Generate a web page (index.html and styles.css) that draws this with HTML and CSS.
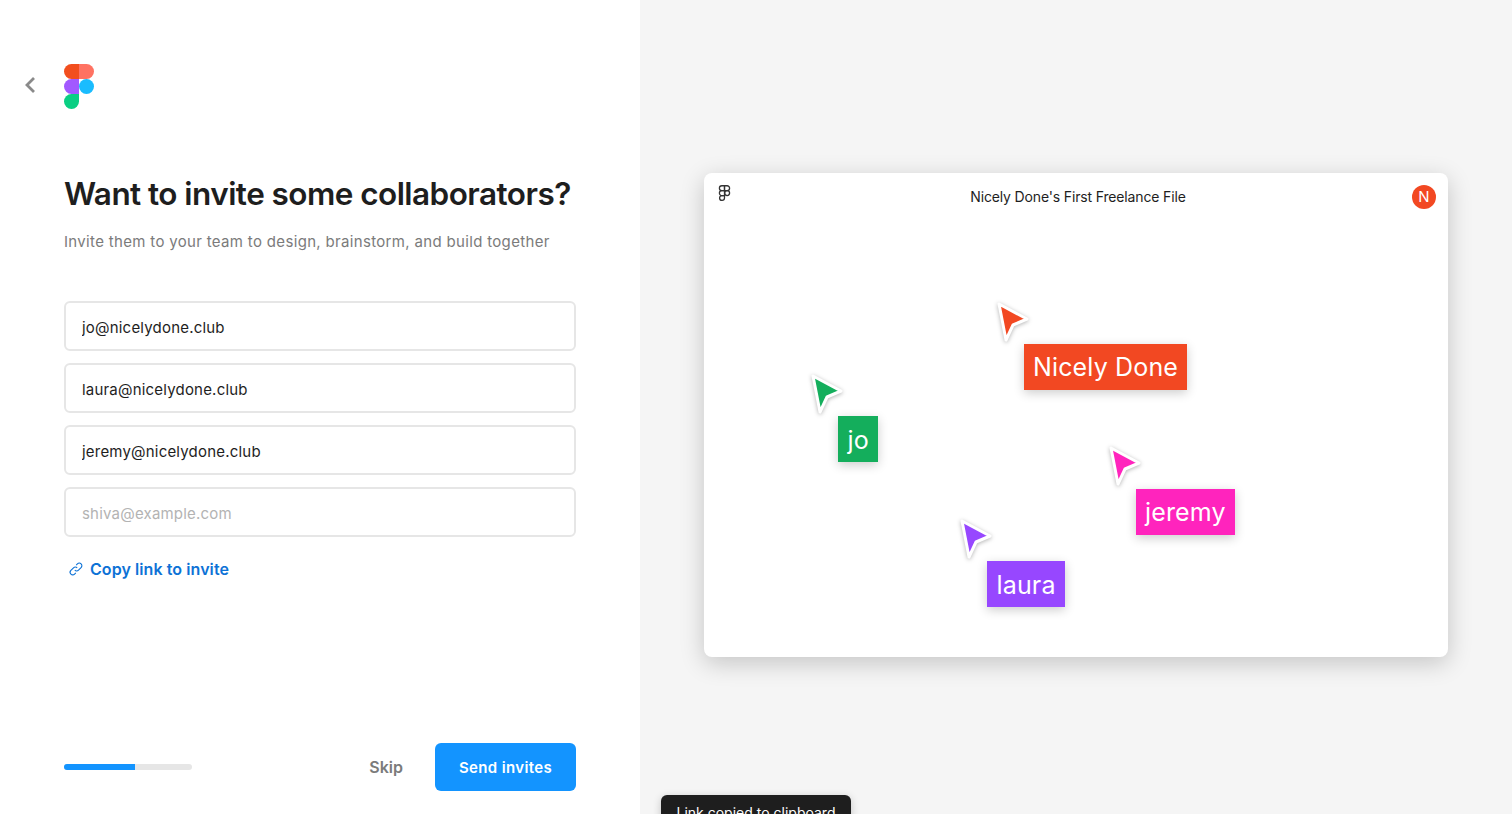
FILE: index.html
```html
<!DOCTYPE html>
<html lang="en">
<head>
    <meta charset="UTF-8">
    <meta name="viewport" content="width=device-width, initial-scale=1.0">
    <title>Invite collaborators</title>
    <link rel="stylesheet" href="styles.css">
</head>
<body>
    <div class="left">
        <div class="top-row">
            <button class="back" aria-label="Back">
                <svg width="12" height="18" viewBox="0 0 12 18"><path d="M10 2 3 9l7 7" fill="none" stroke="#8a8a8a" stroke-width="2.800"/></svg>
            </button>
            <svg class="logo" width="30" height="45" viewBox="0 0 30 45">
                <path d="M15 0H7.5a7.5 7.5 0 0 0 0 15H15z" fill="#f24e1e"/>
                <path d="M15 0h7.5a7.5 7.5 0 0 1 0 15H15z" fill="#ff7262"/>
                <path d="M15 15H7.5a7.5 7.5 0 0 0 0 15H15z" fill="#a259ff"/>
                <circle cx="22.5" cy="22.5" r="7.5" fill="#1abcfe"/>
                <path d="M15 30H7.5a7.5 7.5 0 1 0 7.5 7.5z" fill="#0acf83"/>
            </svg>
        </div>

        <h1>Want to invite some collaborators?</h1>
        <p class="sub">Invite them to your team to design, brainstorm, and build together</p>

        <div class="fields">
            <input type="text" value="jo@nicelydone.club">
            <input type="text" value="laura@nicelydone.club">
            <input type="text" value="jeremy@nicelydone.club">
            <input type="text" placeholder="shiva@example.com">
        </div>

        <a class="copy-link" href="#">
            <svg width="16" height="16" viewBox="0 0 16 16" fill="none" stroke="#0d72d6" stroke-width="1.1">
                <path d="M6.8 9.2a2.6 2.6 0 0 0 3.7 0l2.6-2.6a2.6 2.6 0 0 0-3.7-3.7L8.2 4.1"/>
                <path d="M9.2 6.8a2.6 2.6 0 0 0-3.7 0L2.9 9.4a2.6 2.6 0 0 0 3.7 3.7l1.2-1.2"/>
            </svg>
            Copy link to invite
        </a>

        <div class="footer">
            <div class="progress"><div class="progress-fill"></div></div>
            <a class="skip" href="#">Skip</a>
            <button class="send">Send invites</button>
        </div>
    </div>

    <div class="right">
        <div class="file-card">
            <div class="file-head">
                <svg class="mini-logo" width="13" height="17" viewBox="0 0 30 45" fill="none" stroke="#333" stroke-width="3.4">
                    <path d="M15 2H8a6.5 6.5 0 0 0 0 13h7z"/>
                    <path d="M15 2h7a6.5 6.5 0 0 1 0 13h-7z"/>
                    <path d="M15 15H8a6.5 6.5 0 0 0 0 13h7z"/>
                    <circle cx="22" cy="21.500" r="6.500"/>
                    <path d="M15 28H8a6.500 6.500 0 1 0 7 6.500z"/>
                </svg>
                <span class="file-name">Nicely Done's First Freelance File</span>
                <span class="avatar">N</span>
            </div>

            <!-- cursores no canvas -->
            <svg class="cursor cursor-red" width="38" height="44" viewBox="0 0 38 44"><path d="M5 5 33 20 19 26 12 41z"/></svg>
            <div class="tag tag-red">Nicely Done</div>

            <svg class="cursor cursor-green" width="38" height="44" viewBox="0 0 38 44"><path d="M5 5 33 20 19 26 12 41z"/></svg>
            <div class="tag tag-green">jo</div>

            <svg class="cursor cursor-pink" width="38" height="44" viewBox="0 0 38 44"><path d="M5 5 33 20 19 26 12 41z"/></svg>
            <div class="tag tag-pink">jeremy</div>

            <svg class="cursor cursor-purple" width="38" height="44" viewBox="0 0 38 44"><path d="M5 5 33 20 19 26 12 41z"/></svg>
            <div class="tag tag-purple">laura</div>
        </div>

        <div class="toast">Link copied to clipboard</div>
    </div>
</body>
</html>
```

FILE: styles.css
```css
* {
    box-sizing: border-box;
    margin: 0;
    padding: 0;
}

body {
    font-family: 'Inter', 'Liberation Sans', sans-serif;
    display: flex;
    height: 100vh;
    overflow: hidden;
    background-color: #fff;
    color: #1e1e1e;
}

.left {
    width: 640px;
    flex-shrink: 0;
    display: flex;
    flex-direction: column;
    padding: 64px 64px 23px;
}

.top-row {
    display: flex;
    align-items: center;
    margin-left: -40px;
    gap: 22px;
    height: 45px;
}

.back {
    display: flex;
    background: none;
    border: none;
    width: 18px;
    margin-bottom: 4px;
    cursor: pointer;
}

h1 {
    font-size: 31.500px;
    line-height: 40px;
    font-weight: 600;
    letter-spacing: -0.55px;
    margin-top: 65px;
    white-space: nowrap;
}

.sub {
    font-size: 15px;
    line-height: 24px;
    color: #7b7b7b;
    margin-top: 16px;
    letter-spacing: 0.33px;
}

.fields {
    display: flex;
    flex-direction: column;
    gap: 12px;
    margin-top: 47px;
}

input[type="text"] {
    width: 100%;
    height: 50px;
    padding: 2px 16px 0;
    border: 2px solid #e6e6e6;
    border-radius: 6px;
    font-family: inherit;
    font-size: 15px;
    letter-spacing: 0.2px;
    color: #1e1e1e;
    outline: none;
}

input::placeholder {
    color: #b3b3b3;
}

.copy-link {
    display: flex;
    align-items: center;
    gap: 6px;
    margin-top: 20px;
    margin-left: 4px;
    font-size: 16px;
    line-height: 24px;
    font-weight: 600;
    letter-spacing: 0.08px;
    color: #0d72d6;
    text-decoration: none;
}

.footer {
    display: flex;
    align-items: center;
    margin-top: auto;
}

.progress {
    width: 128px;
    height: 6px;
    background-color: #e6e6e6;
    border-radius: 3px;
    overflow: hidden;
}

.progress-fill {
    width: 55.500%;
    height: 100%;
    background-color: #1394ff;
}

.skip {
    margin-left: auto;
    margin-right: 32px;
    font-size: 16px;
    font-weight: 600;
    color: #7b7b7b;
    text-decoration: none;
}

.send {
    width: 141px;
    height: 48px;
    border: none;
    border-radius: 6px;
    background-color: #1394ff;
    color: #fff;
    font-family: inherit;
    font-size: 15px;
    font-weight: 600;
    letter-spacing: 0.35px;
    cursor: pointer;
}

.right {
    position: relative;
    flex: 1;
    background-color: #f5f5f5;
    padding: 173px 64px 0;
}

.file-card {
    position: relative;
    height: 484px;
    background-color: #fff;
    border-radius: 8px;
    box-shadow: 0 6px 24px rgba(0, 0, 0, 0.2);
}

.file-head {
    display: flex;
    align-items: center;
    justify-content: space-between;
    padding: 12px 12px 0 14px;
}

.mini-logo {
    align-self: flex-start;
}

.file-name {
    font-size: 14px;
    letter-spacing: -0.15px;
    color: #1e1e1e;
    margin-top: -2px;
    margin-left: 13px;
}

.avatar {
    width: 24px;
    height: 24px;
    border-radius: 50%;
    background-color: #f24822;
    color: #fff;
    font-size: 15px;
    line-height: 24px;
    text-align: center;
}

.cursor {
    position: absolute;
    overflow: visible;
    filter: drop-shadow(0 1px 2px rgba(0, 0, 0, 0.3));
}

.cursor path {
    stroke: #fff;
    stroke-width: 3px;
    stroke-linejoin: round;
}

.tag {
    position: absolute;
    height: 46px;
    padding: 0 9px;
    color: #fff;
    font-size: 25px;
    letter-spacing: 0.15px;
    line-height: 47px;
    box-shadow: 0 3px 10px rgba(0, 0, 0, 0.2);
    white-space: nowrap;
}

.cursor-red { left: 290px; top: 126px; }
.cursor-red path { fill: #f24822; }
.tag-red { left: 320px; top: 171px; background-color: #f24822; }

.cursor-green { left: 104px; top: 198px; }
.cursor-green path { fill: #14ae5c; }
.tag-green { left: 134px; top: 243px; padding: 0 9.500px; line-height: 49px; background-color: #14ae5c; }

.cursor-pink { left: 402px; top: 270px; }
.cursor-pink path { fill: #ff24bd; }
.tag-pink { left: 432px; top: 316px; background-color: #ff24bd; }

.cursor-purple { left: 253px; top: 343px; }
.cursor-purple path { fill: #9747ff; }
.tag-purple { left: 283px; top: 388px; padding: 0 9.500px; line-height: 49px; background-color: #9747ff; }

.toast {
    position: absolute;
    left: 21px;
    top: 795px;
    width: 190px;
    height: 40px;
    padding-top: 9px;
    background-color: #1e1e1e;
    border-radius: 6px;
    box-shadow: 0 2px 8px rgba(0, 0, 0, 0.2);
    color: #fff;
    font-size: 14px;
    text-align: center;
}
```
